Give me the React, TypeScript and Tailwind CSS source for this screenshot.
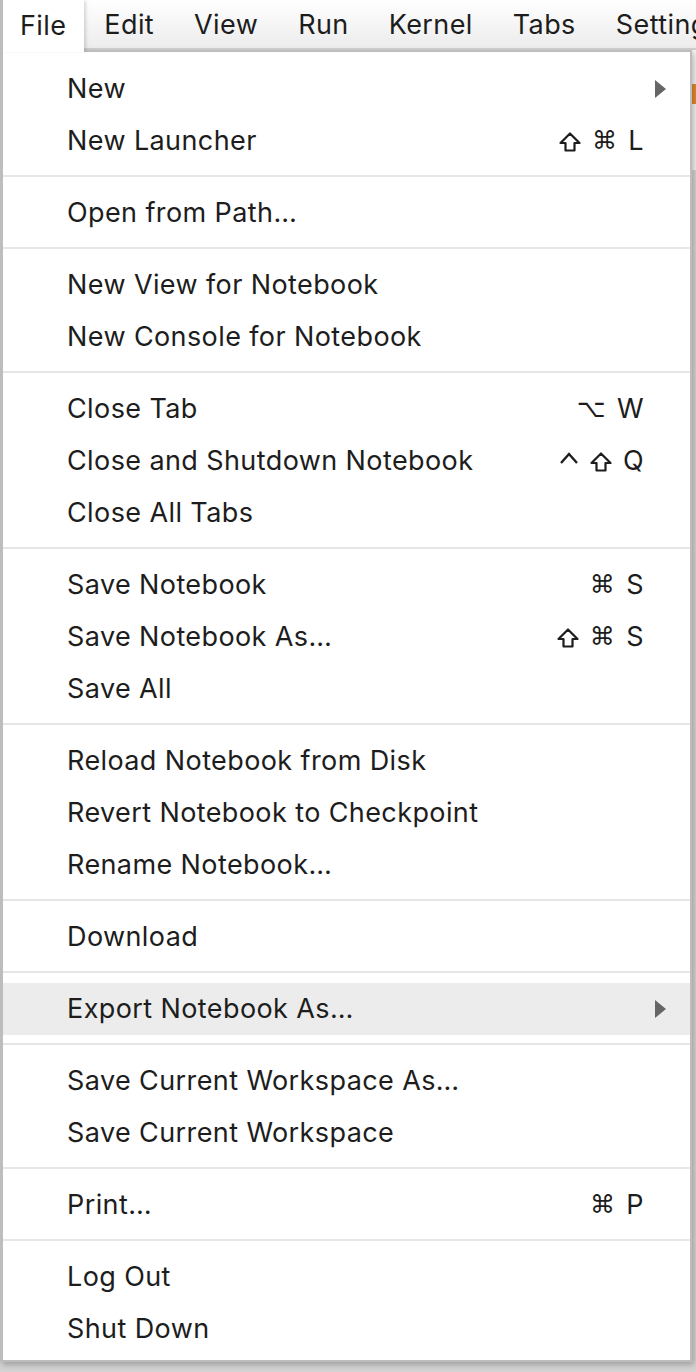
import React from "react";

type Item = { label: string; keys?: string[]; submenu?: boolean; active?: boolean };

const sections: Item[][] = [
  [{ label: "New", submenu: true }, { label: "New Launcher", keys: ["⇧", "⌘", "L"] }],
  [{ label: "Open from Path…" }],
  [{ label: "New View for Notebook" }, { label: "New Console for Notebook" }],
  [
    { label: "Close Tab", keys: ["⌥", "W"] },
    { label: "Close and Shutdown Notebook", keys: ["^", "⇧", "Q"] },
    { label: "Close All Tabs" },
  ],
  [
    { label: "Save Notebook", keys: ["⌘", "S"] },
    { label: "Save Notebook As…", keys: ["⇧", "⌘", "S"] },
    { label: "Save All" },
  ],
  [
    { label: "Reload Notebook from Disk" },
    { label: "Revert Notebook to Checkpoint" },
    { label: "Rename Notebook…" },
  ],
  [{ label: "Download" }],
  [{ label: "Export Notebook As…", submenu: true, active: true }],
  [{ label: "Save Current Workspace As…" }, { label: "Save Current Workspace" }],
  [{ label: "Print…", keys: ["⌘", "P"] }],
  [{ label: "Log Out" }, { label: "Shut Down" }],
];

const topMenus = ["Edit", "View", "Run", "Kernel", "Tabs", "Settings"];

function ShiftIcon() {
  return (
    <svg width="22" height="22" viewBox="0 0 22 22" className="mt-[1px]">
      <path
        d="M11 2.5 L20.5 12 H15.5 V19.5 H6.5 V12 H1.5 Z"
        fill="none"
        stroke="#1d1d1d"
        strokeWidth="2.2"
        strokeLinejoin="round"
      />
    </svg>
  );
}

function Key({ k }: { k: string }) {
  if (k === "⇧") return <ShiftIcon />;
  if (k === "^")
    return (
      <svg width="20" height="14" viewBox="0 0 20 14" className="mb-[6px]">
        <path d="M2 12 L10 3 L18 12" fill="none" stroke="#1d1d1d" strokeWidth="2.4" />
      </svg>
    );
  if (k === "⌘" || k === "⌥")
    return <span className="font-['DejaVu_Sans',sans-serif] text-[25px]">{k}</span>;
  return <span>{k}</span>;
}

function Row({ item }: { item: Item }) {
  return (
    <div
      className={`relative flex h-[52px] items-center justify-between pl-[64px] pr-[46px] ${
        item.active ? "bg-[#ececec]" : ""
      }`}
    >
      <span>{item.label}</span>
      {item.keys && (
        <span className="flex items-center gap-[11px]">
          {item.keys.map((k, i) => (
            <Key key={i} k={k} />
          ))}
        </span>
      )}
      {item.submenu && (
        <svg
          className="absolute right-[24px] top-1/2 -translate-y-1/2"
          width="11"
          height="18"
          viewBox="0 0 11 18"
        >
          <path d="M0 0 L11 9 L0 18 Z" fill="#666" />
        </svg>
      )}
    </div>
  );
}

export default function App() {
  return (
    <div className="relative h-[1372px] w-[696px] overflow-hidden bg-[#d4d4d4] font-['Inter',sans-serif] text-[27px] tracking-[0.4px] text-[#1d1d1d]">
      {/* page behind the menu */}
      <div className="absolute left-0 top-[50px] h-[120px] w-full bg-[#f4f4f4]">
        <div className="absolute right-0 top-[34px] h-[20px] w-[4px] bg-[#e08a2c]" />
      </div>

      {/* menu bar */}
      <div className="relative flex h-[50px] border-b-2 border-[#cfcfcf] bg-gradient-to-b from-white to-[#ececec]">
        <div className="relative z-20 flex h-[52px] items-center border-l-[3px] border-[#bdbdbd] bg-white pl-[17px] pr-[18px] pt-[1px] shadow-[3px_0_3px_-1px_rgba(0,0,0,0.15)]">
          File
        </div>
        {topMenus.map((m) => (
          <div key={m} className="flex h-full items-center px-[20px] pt-[2px] whitespace-nowrap">
            {m}
          </div>
        ))}
      </div>

      {/* file menu */}
      <div className="absolute left-0 top-[50px] z-10 w-[692px] border-2 border-l-[3px] border-[#bdbdbd] bg-white pb-[5px] pt-[11px] shadow-[2px_3px_6px_rgba(0,0,0,0.25)]">
        {sections.map((sec, i) => (
          <div key={i}>
            {i > 0 && (
              <div className="pb-[10px] pt-[8px]">
                <div className="h-[2px] bg-[#e6e6e6]" />
              </div>
            )}
            {sec.map((item) => (
              <Row key={item.label} item={item} />
            ))}
          </div>
        ))}
      </div>
    </div>
  );
}
